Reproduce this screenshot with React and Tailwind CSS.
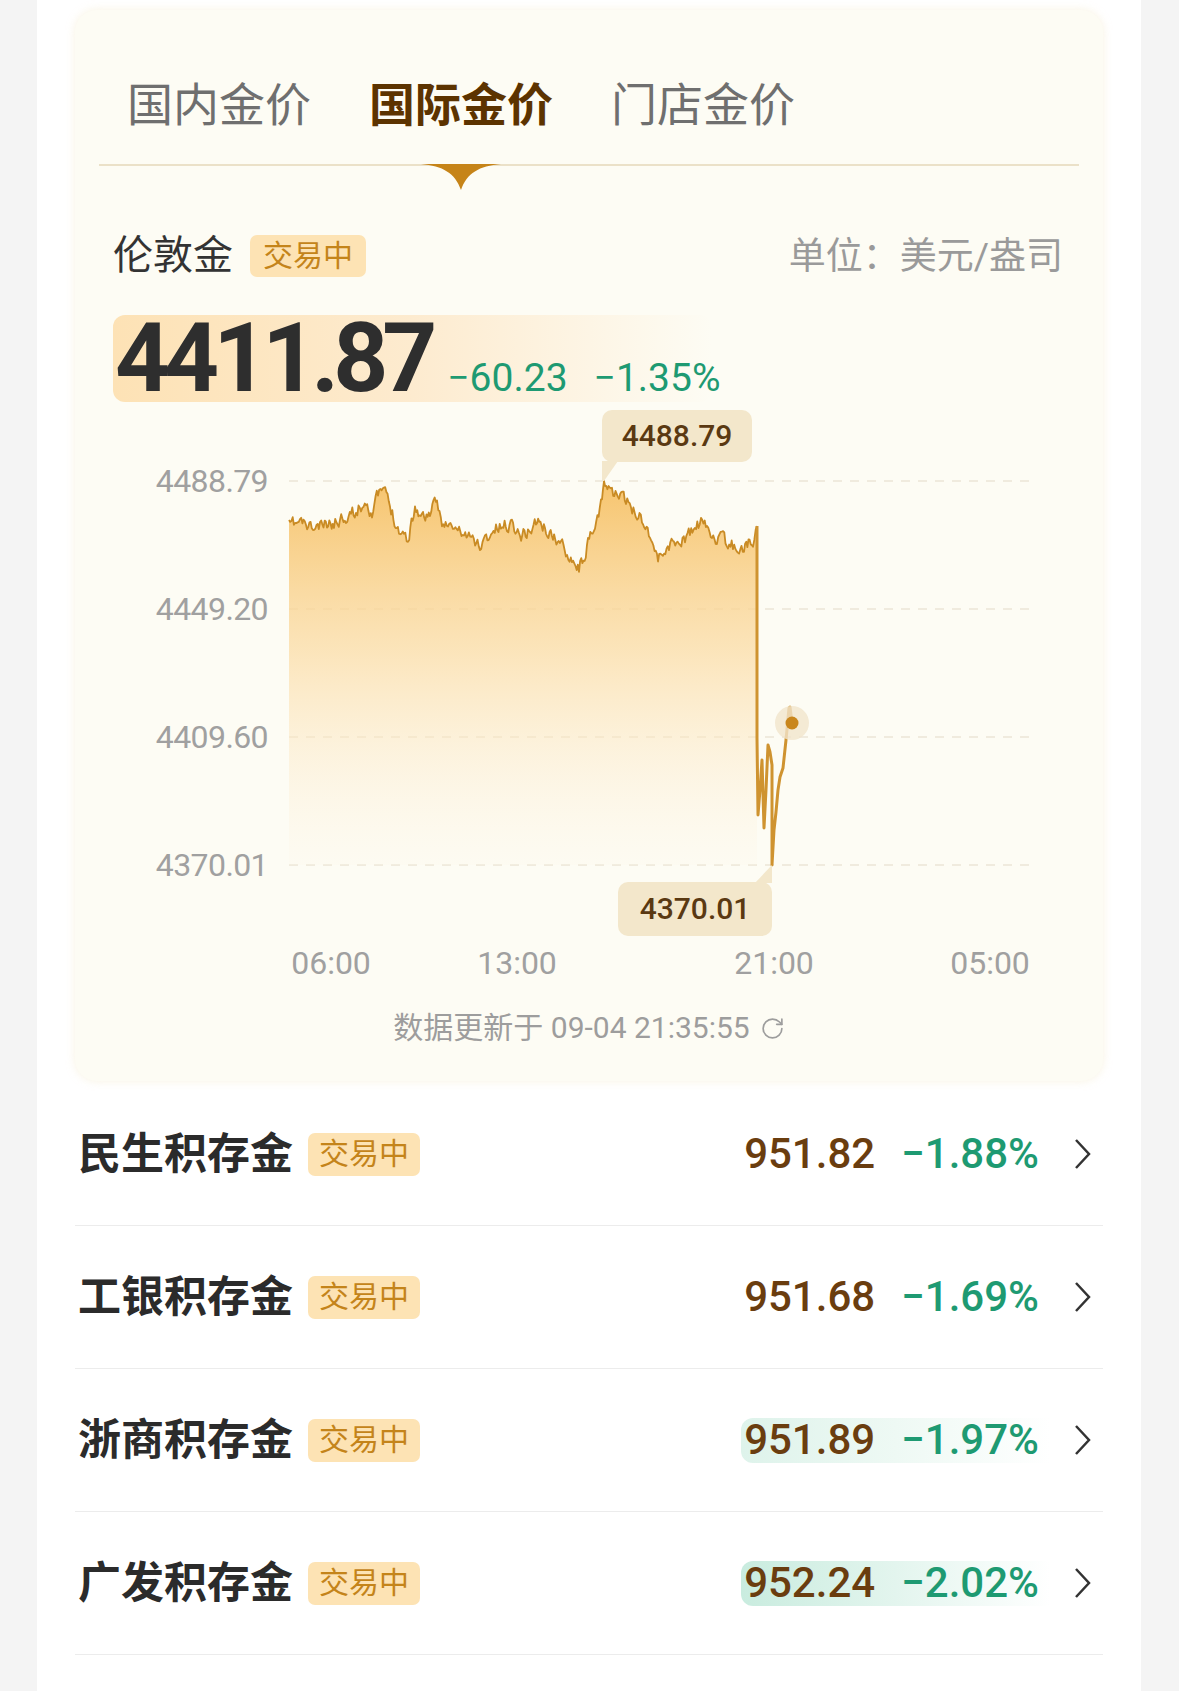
import { RotateCw } from 'lucide-react'

// chart frame: plot area origin in page coords
const OX = 289
const OY = 441

const KEYS = [
  [289, 526], [300, 522], [313, 529], [334, 523], [346, 514], [356, 512], [366, 500], [372, 512],
  [378, 496], [384, 489], [390, 507], [399, 529], [404, 534], [408, 539], [415, 507], [423, 518],
  [430, 512], [437, 505], [442, 520], [448, 526], [464, 534], [480, 545], [496, 529], [512, 523],
  [520, 535], [529, 531], [537, 520], [545, 529], [553, 536], [561, 545], [572, 556], [579, 568],
  [588, 545], [595, 529], [601, 507], [604, 481], [612, 491], [626, 502], [642, 518], [650, 534],
  [658, 559], [669, 545], [685, 539], [701, 523], [712, 534], [728, 545], [744, 548], [753, 539],
  [757, 526],
]

const DROP = [
  [757, 738], [758, 815], [760, 790], [762, 760], [764, 828], [766, 790], [768, 745],
  [770, 752], [772, 765], [772, 865], [774, 830], [776, 812], [778, 790], [780, 777],
  [783, 768], [786, 740], [789, 708], [790, 707], [792, 723],
]

function buildMain() {
  let seed = 11
  const rand = () => {
    seed = (seed * 16807) % 2147483647
    return seed / 2147483647
  }
  const pts = []
  let w = 0
  for (let i = 0; i < KEYS.length - 1; i++) {
    const [x0, y0] = KEYS[i]
    const [x1, y1] = KEYS[i + 1]
    const n = Math.max(1, Math.round((x1 - x0) / 1.2))
    for (let j = 0; j < n; j++) {
      const t = j / n
      w = w * 0.5 + (rand() - 0.5) * 12
      let y = y0 + (y1 - y0) * t + w
      if (x0 === 604 && j === 0) y = 481
      else if (y < 486) y = 486
      pts.push([x0 + (x1 - x0) * t, y])
    }
  }
  pts.push(KEYS[KEYS.length - 1])
  return pts
}

const toPath = (pts, start = 'M') =>
  pts.map((p, i) => `${i === 0 ? start : 'L'}${(p[0] - OX).toFixed(1)} ${(p[1] - OY).toFixed(1)}`).join(' ')

const mainPts = buildMain()
const linePath = toPath(mainPts)
const fillPath = `${linePath} L${757 - OX} ${865 - OY} L0 ${865 - OY} Z`
const dropPath = `M${757 - OX} ${526 - OY} ` + toPath(DROP, 'L')

const yLabels = ['4488.79', '4449.20', '4409.60', '4370.01']
const gridY = [40, 168, 296, 424]
const xLabels = [
  { t: '06:00', x: 42 },
  { t: '13:00', x: 228 },
  { t: '21:00', x: 485 },
  { t: '05:00', x: 701 },
]

const rows = [
  { name: '民生积存金', price: '951.82', pct: '−1.88%', hl: '' },
  { name: '工银积存金', price: '951.68', pct: '−1.69%', hl: '' },
  { name: '浙商积存金', price: '951.89', pct: '−1.97%', hl: 'bg-linear-to-r from-[#def3eb] via-[#eef9f4] to-transparent' },
  { name: '广发积存金', price: '952.24', pct: '−2.02%', hl: 'bg-linear-to-r from-[#c9ecdf] via-[#e3f5ee] to-transparent' },
]

function Badge({ className = '' }) {
  return (
    <span className={`flex items-center rounded-[7px] bg-[#fde3b4] text-[30px] leading-none text-[#c4841a] ${className}`}>
      交易中
    </span>
  )
}

function PriceChart() {
  return (
    <div className="mt-[39px] flex h-[464px]">
      {/* y axis */}
      <div className="flex w-[214px] flex-col items-end gap-[96px] pr-[21px] pt-[24px]">
        {yLabels.map((l) => (
          <span key={l} className="h-[32px] text-[32px] leading-[32px] tracking-[-0.6px] text-[#a0a0a0]">{l}</span>
        ))}
      </div>

      {/* plot */}
      <div className="relative w-[741px]">
        <svg width="741" height="464" viewBox="0 0 741 464" className="overflow-visible">
          <defs>
            <linearGradient id="goldFill" x1="0" y1="0" x2="0" y2="1">
              <stop offset="0%" stopColor="#f6c166" stopOpacity="0.95" />
              <stop offset="45%" stopColor="#fbdba3" stopOpacity="0.7" />
              <stop offset="100%" stopColor="#fdf6e8" stopOpacity="0.2" />
            </linearGradient>
          </defs>
          {gridY.map((y) => (
            <line key={y} x1="0" x2="741" y1={y} y2={y} stroke="#ebe5d6" strokeWidth="1.5" strokeDasharray="9 8" />
          ))}
          <path d={fillPath} fill="url(#goldFill)" />
          <path d={linePath} fill="none" stroke="#c98b24" strokeWidth="1.8" strokeLinejoin="round" />
          <path d={dropPath} fill="none" stroke="#cf9330" strokeWidth="3" strokeLinejoin="round" />
          {/* tooltip pointers */}
          <polygon points="313,20 329,20 315,40 313,40" fill="#f3e7cb" />
          <polygon points="483,424 483,442 466,442" fill="#f3e7cb" />
          {/* live dot */}
          <circle cx="503" cy="282" r="17" fill="#f1e5cc" opacity="0.8" />
          <circle cx="503" cy="282" r="6.5" fill="#c9861c" />
        </svg>

        <div className="absolute left-[313px] top-[-31px] flex h-[52px] w-[150px] items-center justify-center rounded-[10px] bg-[#f3e7cb] text-[30px] font-medium leading-none text-[#5a3912]">
          4488.79
        </div>
        <div className="absolute left-[329px] top-[441px] flex h-[54px] w-[154px] items-center justify-center rounded-[10px] bg-[#f3e7cb] text-[30px] font-medium leading-none text-[#5a3912]">
          4370.01
        </div>
      </div>
    </div>
  )
}

export default function App() {
  return (
    <div className="min-h-[1691px] bg-[#f4f4f4] pl-[37px] pr-[38px] font-['Roboto','Noto_Sans_CJK_SC',sans-serif]">
      <div className="min-h-[1691px] bg-white px-[38px] pt-[10px]">
        {/* gold card */}
        <div className="rounded-[22px] bg-[#fdfcf4] pb-[38px] shadow-[0_0_10px_rgba(246,238,214,0.7)]">
          {/* tabs */}
          <div className="flex gap-[58px] pl-[52px] pt-[72px]">
            <span className="text-[46px] leading-[46px] text-[#6f6f6f]">国内金价</span>
            <span className="relative text-[46px] font-bold leading-[46px] text-[#5c3300]">
              国际金价
              <svg width="80" height="26" viewBox="0 0 80 26" className="absolute left-1/2 top-[82px] -translate-x-1/2">
                <path d="M0 0 H80 C58 2 46 9 40 26 C34 9 22 2 0 0 Z" fill="#c68418" />
              </svg>
            </span>
            <span className="text-[46px] leading-[46px] text-[#6f6f6f]">门店金价</span>
          </div>
          <div className="mx-[24px] mt-[36px] h-[2px] bg-[#ebe1c8]" />

          {/* instrument row */}
          <div className="mt-[69px] flex h-[42px] items-center pl-[38px] pr-[40px]">
            <span className="text-[40px] leading-none text-[#333333]">伦敦金</span>
            <Badge className="ml-[17px] h-[42px] px-[13px]" />
            <span className="ml-auto text-[37px] leading-none text-[#9a9a9a]">单位：美元/盎司</span>
          </div>

          {/* price */}
          <div className="ml-[38px] mt-[38px] flex h-[87px] w-[599px] items-baseline rounded-[12px] bg-linear-to-r from-[#fde2b5] via-[#fdebcf] to-transparent pl-[2px]">
            <span className="text-[96px] font-bold leading-[87px] tracking-[-6px] text-[#2e2e2e]">4411.87</span>
            <span className="ml-[16px] text-[39px] leading-none text-[#1e9a72]">−60.23</span>
            <span className="ml-[26px] text-[39px] leading-none text-[#1e9a72]">−1.35%</span>
          </div>

          <PriceChart />

          {/* x axis */}
          <div className="mt-[42px] flex h-[32px]">
            <div className="w-[214px]" />
            <div className="relative w-[741px]">
              {xLabels.map((l) => (
                <span
                  key={l.t}
                  className="absolute top-0 -translate-x-1/2 text-[32px] leading-[32px] text-[#a0a0a0]"
                  style={{ left: l.x }}
                >
                  {l.t}
                </span>
              ))}
            </div>
          </div>

          {/* update time */}
          <div className="mt-[34px] flex h-[30px] items-center justify-center gap-[10px] text-[30px] leading-none text-[#9d9d9d]">
            <span>数据更新于 09-04 21:35:55</span>
            <RotateCw className="h-[25px] w-[25px]" strokeWidth={1.6} />
          </div>
        </div>

        {/* bank list */}
        <div className="pt-[2px]">
          {rows.map((r) => (
            <div key={r.name} className="flex h-[143px] items-center border-b border-[#ececec] pl-[3px] pr-[11px]">
              <span className="text-[43px] font-bold leading-none text-[#2b2b2b]">{r.name}</span>
              <Badge className="ml-[15px] h-[43px] px-[11px]" />
              <div className={`ml-auto flex h-[45px] items-center gap-[26px] rounded-l-[12px] pl-[3px] pr-[11px] ${r.hl}`}>
                <span className="text-[42px] font-medium leading-none text-[#6a3d0f]">{r.price}</span>
                <span className="text-[42px] font-medium leading-none text-[#1e9a72]">{r.pct}</span>
              </div>
              <svg width="19" height="34" viewBox="0 0 19 34" className="ml-[23px]">
                <polyline points="3,3 16,17 3,31" fill="none" stroke="#333333" strokeWidth="2.5" />
              </svg>
            </div>
          ))}
        </div>
      </div>
    </div>
  )
}
